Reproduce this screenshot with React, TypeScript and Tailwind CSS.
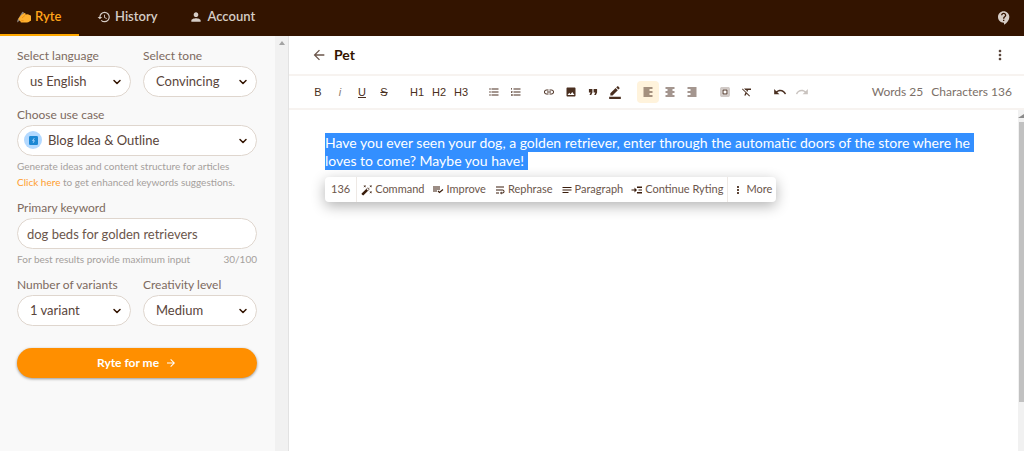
import type { ReactNode } from 'react'
import clsx from 'clsx'
import { FiChevronDown } from 'react-icons/fi'
import {
  MdArrowBack,
  MdArrowForward,
  MdAutoFixHigh,
  MdBorderColor,
  MdContactSupport,
  MdFormatAlignCenter,
  MdFormatAlignLeft,
  MdFormatAlignRight,
  MdFormatClear,
  MdFormatListBulleted,
  MdFormatListNumbered,
  MdFormatQuote,
  MdHistory,
  MdImage,
  MdLink,
  MdMoreVert,
  MdNotes,
  MdPerson,
  MdRedo,
  MdSelectAll,
  MdUndo,
  MdWrapText,
} from 'react-icons/md'

function WritingHand() {
  return (
    <svg viewBox="0 0 14 12" className="w-3.5 h-3" aria-hidden="true">
      <path d="M0 11.6.5 9 5.4.8l1.8 1L2.2 10z" fill="#8f857c" />
      <path
        d="M1.6 7.4 4.4 4l3-2c1.1-.3 1.5.6.9 1.5l2.200-.2c1.400.2 2.500 1 3.500 1.500v5c-1.300.2-2.300 1.700-4 1.700H4.400c-1.200 0-1.400-1-.7-1.400-1.300 0-1.700-.7-1.200-1.300-.9-.1-1.300-.7-.9-1.400z"
        fill="#ffb02e"
      />
      <path d="M4.200 9.700h2.400M5 7l3-2.600" stroke="#e07c0c" strokeWidth=".6" fill="none" />
    </svg>
  )
}

function ImproveIcon() {
  return (
    <svg viewBox="0 0 24 24" className="size-3" fill="currentColor" aria-hidden="true">
      <path d="M2 5h14v2H2zM2 9h14v2H2zM2 13h8v2H2z" />
      <path d="m12 14 3 3 7-6" stroke="currentColor" strokeWidth="2.4" fill="none" />
    </svg>
  )
}

function ContinueIcon() {
  return (
    <svg viewBox="0 0 24 24" className="size-3" fill="currentColor" aria-hidden="true">
      <path d="M1 11h6V7l5 5-5 5v-4H1z" />
      <path d="M12 5h10v3H12zM15 11h7v2h-7zM12 16h10v3H12z" />
    </svg>
  )
}

function NavTab({ icon, active, className, children }: { icon: ReactNode; active?: boolean; className?: string; children: ReactNode }) {
  return (
    <a
      href="#"
      className={clsx(
        'flex items-center gap-1 border-b-2 text-[13px] font-semibold',
        active ? 'border-[#ffa800] text-[#ffa31a]' : 'border-transparent text-[#d6cdc6]',
        className
      )}
    >
      {icon}
      {children}
    </a>
  )
}

function SelectField({ id, label, value, badge }: { id: string; label: string; value: string; badge?: ReactNode }) {
  return (
    <div className="flex-1">
      <label htmlFor={id} className="block mb-0.5 text-xs leading-4 text-[#7d6a60]">
        {label}
      </label>
      <div className="relative">
        {badge}
        <select
          id={id}
          defaultValue={value}
          className={clsx(
            'block w-full h-[31px] appearance-none rounded-full border border-[#dfd6ce] bg-white pr-7 text-[13px] text-[#59443a]',
            badge ? 'pl-[30px]' : 'pl-3'
          )}
        >
          <option>{value}</option>
        </select>
        <FiChevronDown className="pointer-events-none absolute right-2 top-[10px] size-3 text-[#331400]" strokeWidth={3} />
      </div>
    </div>
  )
}

function Sidebar() {
  return (
    <aside className="flex shrink-0 w-[289px] border-r border-[#e2e2e2] bg-[#f9f9f9]">
      <form className="flex-1 flex flex-col gap-2.5 pl-[17px] pr-[18px] pt-3">
        <div className="flex gap-3">
          <SelectField id="language" label="Select language" value="us English" />
          <SelectField id="tone" label="Select tone" value="Convincing" />
        </div>
        <div>
          <SelectField
            id="use-case"
            label="Choose use case"
            value="Blog Idea & Outline"
            badge={
              <span className="absolute left-[7px] top-1.5 flex items-center justify-center size-[18px] rounded-full bg-[#b3d9ff]">
                <svg viewBox="0 0 10 10" className="size-[9px]" aria-hidden="true">
                  <rect width="10" height="10" rx="1.5" fill="#1b87d3" />
                  <path d="M5.8 2.5 4 5.2h2L4.6 7.6" stroke="#b3d9ff" fill="none" />
                </svg>
              </span>
            }
          />
          <p className="mt-0.5 text-[10px] leading-4 text-[#a5a09c]">
            Generate ideas and content structure for articles
            <br />
            <a href="#" className="text-[#ff9d2e]">Click here</a> to get enhanced keywords suggestions.
          </p>
        </div>
        <div>
          <label htmlFor="keyword" className="block mb-0.5 text-xs leading-4 text-[#7d6a60]">
            Primary keyword
          </label>
          <input
            id="keyword"
            defaultValue="dog beds for golden retrievers"
            className="block w-full h-[31px] rounded-full border border-[#dfd6ce] bg-white px-[9px] text-[13px] text-[#6b564b]"
          />
          <div className="flex justify-between mt-0.5 text-[10px] leading-4 text-[#a5a09c]">
            <span>For best results provide maximum input</span>
            <span>30/100</span>
          </div>
        </div>
        <div className="flex gap-3">
          <SelectField id="variants" label="Number of variants" value="1 variant" />
          <SelectField id="creativity" label="Creativity level" value="Medium" />
        </div>
        <button
          type="button"
          className="flex items-center justify-center gap-1.5 mt-3 h-[30px] rounded-full bg-[#ff8f00] text-xs font-bold text-white shadow-[0_1px_3px_rgba(0,0,0,0.4)]"
        >
          Ryte for me
          <MdArrowForward className="size-3" />
        </button>
      </form>
      <div className="w-[13px] flex justify-center bg-[#f1f1f1] pt-[5px]">
        <span className="size-0 border-x-3 border-b-4 border-x-transparent border-b-[#a3a3a3]" />
      </div>
    </aside>
  )
}

function Tool({ label, active, muted, children }: { label: string; active?: boolean; muted?: boolean; children: ReactNode }) {
  return (
    <button
      type="button"
      aria-label={label}
      className={clsx(
        'flex items-center justify-center size-[22px] rounded-sm',
        active && 'bg-[#fff3dc]',
        muted ? 'text-[#c9c3bf]' : 'text-[#4a2f20]'
      )}
    >
      {children}
    </button>
  )
}

function Toolbar() {
  return (
    <div className="flex items-center h-[34px] pl-[18px] pr-3 border-b-2 border-[#f7f3f0]">
      <div className="flex gap-[11px] font-['Liberation_Sans',sans-serif] text-[11px]">
        <div className="flex">
          <Tool label="Bold">B</Tool>
          <Tool label="Italic"><i className="text-[#8a7a70]">i</i></Tool>
          <Tool label="Underline"><u>U</u></Tool>
          <Tool label="Strikethrough"><s>S</s></Tool>
        </div>
        <div className="flex">
          <Tool label="Heading 1">H1</Tool>
          <Tool label="Heading 2">H2</Tool>
          <Tool label="Heading 3">H3</Tool>
        </div>
        <div className="flex">
          <Tool label="Bulleted list"><MdFormatListBulleted className="size-3" /></Tool>
          <Tool label="Numbered list"><MdFormatListNumbered className="size-3" /></Tool>
        </div>
        <div className="flex">
          <Tool label="Link"><MdLink className="size-3" /></Tool>
          <Tool label="Image"><MdImage className="size-3" /></Tool>
          <Tool label="Quote"><MdFormatQuote className="size-3.5" /></Tool>
          <Tool label="Highlight"><MdBorderColor className="size-3.5" /></Tool>
        </div>
        <div className="flex">
          <Tool label="Align left" active><MdFormatAlignLeft className="size-3" /></Tool>
          <Tool label="Align center"><MdFormatAlignCenter className="size-3" /></Tool>
          <Tool label="Align right"><MdFormatAlignRight className="size-3" /></Tool>
        </div>
        <div className="flex">
          <Tool label="Select all"><MdSelectAll className="size-3" /></Tool>
          <Tool label="Clear formatting"><MdFormatClear className="size-3" /></Tool>
        </div>
        <div className="flex">
          <Tool label="Undo"><MdUndo className="size-3.5" /></Tool>
          <Tool label="Redo" muted><MdRedo className="size-3.5" /></Tool>
        </div>
      </div>
      <div className="ml-auto flex gap-2 text-xs text-[#7b6f68]">
        <span>Words 25</span>
        <span>Characters 136</span>
      </div>
    </div>
  )
}

const actions = [
  { name: 'Command', icon: <MdAutoFixHigh className="size-3" /> },
  { name: 'Improve', icon: <ImproveIcon /> },
  { name: 'Rephrase', icon: <MdWrapText className="size-3" /> },
  { name: 'Paragraph', icon: <MdNotes className="size-3" /> },
  { name: 'Continue Ryting', icon: <ContinueIcon /> },
]

function SelectionMenu() {
  return (
    <div className="flex w-fit mt-[7px] h-[25px] rounded-sm bg-white text-[11px] text-[#6b564b] shadow-[0_4px_14px_rgba(0,0,0,0.3)]">
      <span className="flex items-center px-1.5 border-r border-[#eee9e5]">136</span>
      <div className="flex items-center gap-2 px-1">
        {actions.map(({ name, icon }) => (
          <button key={name} type="button" className="flex items-center gap-0.5">
            <span className="text-[#3a1d0c]">{icon}</span>
            {name}
          </button>
        ))}
      </div>
      <button type="button" className="flex items-center gap-0.5 px-1 border-l border-[#eee9e5]">
        <MdMoreVert className="size-3 text-[#3a1d0c]" />
        More
      </button>
    </div>
  )
}

export default function App() {
  return (
    <div className="flex flex-col min-h-screen bg-white font-['Lato','Open_Sans',sans-serif]">
      <header className="flex h-9 bg-[#331400]">
        <nav className="flex">
          <NavTab icon={<WritingHand />} active className="w-[79px] pl-[17px]">Ryte</NavTab>
          <NavTab icon={<MdHistory className="size-3.5" />} className="pl-[18px] pr-4">History</NavTab>
          <NavTab icon={<MdPerson className="size-3.5" />} className="px-4">Account</NavTab>
        </nav>
        <button type="button" aria-label="Help" className="ml-auto pr-3 text-[#d6cdc6]">
          <MdContactSupport className="size-4" />
        </button>
      </header>

      <div className="flex flex-1">
        <Sidebar />
        <main className="flex-1 flex flex-col min-w-0">
          <div className="flex items-center h-10 pl-[22px] pr-4 border-b-2 border-[#f7f3f0]">
            <button type="button" aria-label="Back" className="text-[#6b564b]">
              <MdArrowBack className="size-4" />
            </button>
            <h1 className="ml-[7px] text-sm font-bold text-[#331400]">Pet</h1>
            <button type="button" aria-label="More options" className="ml-auto text-[#59443a]">
              <MdMoreVert className="size-4" />
            </button>
          </div>
          <Toolbar />
          <div className="flex flex-1">
            <div className="flex-1 pl-9 pr-12 pt-6">
              <p className="text-sm leading-[18px] text-white">
                <span className="bg-[#338fff] py-px whitespace-pre-wrap">
                  {'Have you ever seen your dog, a golden retriever, enter through the automatic doors of the store where he loves to come? Maybe you have! '}
                </span>
              </p>
              <SelectionMenu />
            </div>
            <div className="flex flex-col w-1.5 bg-[#f1f1f1]">
              <div className="h-3 pt-1">
                <span className="block size-0 border-l-6 border-b-4 border-l-transparent border-b-[#8a8a8a]" />
              </div>
              <div className="flex-17 ml-px bg-[#c1c1c1]" />
              <div className="flex-3" />
            </div>
          </div>
        </main>
      </div>
    </div>
  )
}
